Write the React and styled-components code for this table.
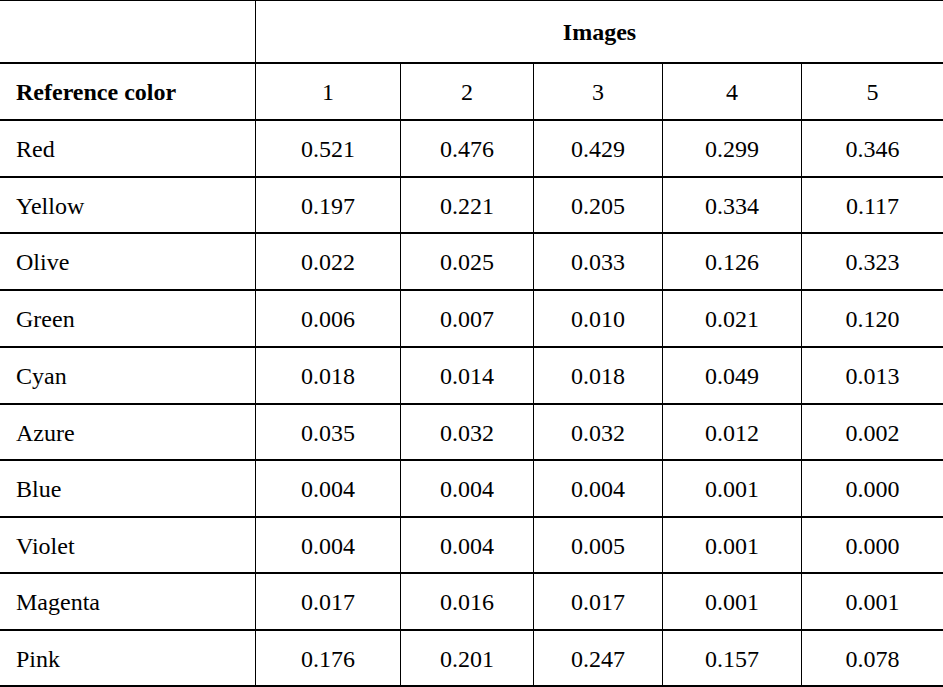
import React from "react";
import styled, { createGlobalStyle } from "styled-components";

const Global = createGlobalStyle`
  html, body { margin: 0; padding: 0; background: #fff; }
`;

const Table = styled.table`
  width: 943px;
  table-layout: fixed;
  border-collapse: separate;
  border-spacing: 0;
  border-top: 1px solid #000;
  font-family: "Liberation Serif", serif;
  font-size: 24px;
  line-height: 1;
  color: #000;
`;

const Row = styled.tr`
  height: ${(p) => p.$h}px;
`;

const Cell = styled.td`
  box-sizing: border-box;
  font-family: "Liberation Serif", serif;
  font-weight: ${(p) => (p.$bold ? 700 : 400)};
  white-space: nowrap;
  vertical-align: middle;
  text-align: ${(p) => (p.$left ? "left" : "center")};
  padding: ${(p) => (p.$left ? "1px 0 0 16px" : "1px 0 0 0")};
  border-bottom: 2px solid #000;
  border-right: ${(p) => (p.$last ? "0" : "1px solid #000")};
`;

const widths = [256, 145, 133, 129, 139, 141];
const cols = ["1", "2", "3", "4", "5"];
const heights = [57, 56, 57, 57, 57, 56, 57, 56, 57, 56];

const rows = [
  ["Red", "0.521", "0.476", "0.429", "0.299", "0.346"],
  ["Yellow", "0.197", "0.221", "0.205", "0.334", "0.117"],
  ["Olive", "0.022", "0.025", "0.033", "0.126", "0.323"],
  ["Green", "0.006", "0.007", "0.010", "0.021", "0.120"],
  ["Cyan", "0.018", "0.014", "0.018", "0.049", "0.013"],
  ["Azure", "0.035", "0.032", "0.032", "0.012", "0.002"],
  ["Blue", "0.004", "0.004", "0.004", "0.001", "0.000"],
  ["Violet", "0.004", "0.004", "0.005", "0.001", "0.000"],
  ["Magenta", "0.017", "0.016", "0.017", "0.001", "0.001"],
  ["Pink", "0.176", "0.201", "0.247", "0.157", "0.078"],
];

export default function App() {
  return (
    <div>
      <Global />
      <Table>
        <colgroup>
          {widths.map((w, i) => (
            <col key={i} style={{ width: w }} />
          ))}
        </colgroup>
        <thead>
          <Row $h={63}>
            <Cell $left />
            <Cell colSpan={5} $bold $last>
              Images
            </Cell>
          </Row>
          <Row $h={57}>
            <Cell $left $bold>
              Reference color
            </Cell>
            {cols.map((c, i) => (
              <Cell key={c} $last={i === cols.length - 1}>
                {c}
              </Cell>
            ))}
          </Row>
        </thead>
        <tbody>
          {rows.map((r, ri) => (
            <Row key={r[0]} $h={heights[ri]}>
              {r.map((v, i) => (
                <Cell key={i} $left={i === 0} $last={i === r.length - 1}>
                  {v}
                </Cell>
              ))}
            </Row>
          ))}
        </tbody>
      </Table>
    </div>
  );
}
